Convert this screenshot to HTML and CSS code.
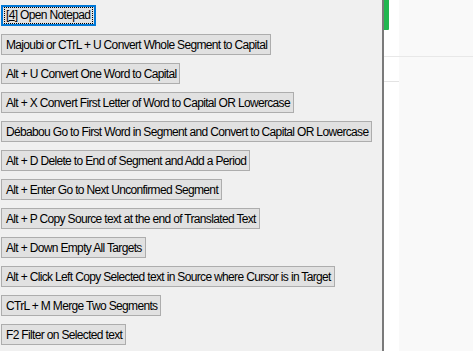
FILE: index.html
```html
<!DOCTYPE html>
<html lang="en">
<head>
  <meta charset="UTF-8">
  <title>Shortcuts</title>
  <link rel="stylesheet" href="styles.css">
</head>
<body>
  <div class="panel">
    <button class="focused"><span class="focus-rect">[<u>4</u>] Open Notepad</span></button>
    <button>Majoubi or CTrL + U Convert Whole Segment to Capital</button>
    <button>Alt + U Convert One Word to Capital</button>
    <button>Alt + X Convert First Letter of Word to Capital OR Lowercase</button>
    <button>Débabou Go to First Word in Segment and Convert to Capital OR Lowercase</button>
    <button>Alt + D Delete to End of Segment and Add a Period</button>
    <button>Alt + Enter Go to Next Unconfirmed Segment</button>
    <button>Alt + P Copy Source text at the end of Translated Text</button>
    <button>Alt + Down Empty All Targets</button>
    <button>Alt + Click Left Copy Selected text in Source where Cursor is in Target</button>
    <button>CTrL + M Merge Two Segments</button>
    <button>F2 Filter on Selected text</button>
  </div>
  <div class="editor">
    <div class="gutter">
      <div class="status-bar"></div>
      <div class="gutter-row"></div>
    </div>
    <div class="rule"></div>
  </div>
</body>
</html>
```
FILE: styles.css
```css
html, body {
  margin: 0;
  height: 100%;
}
body {
  display: flex;
  font-family: "Liberation Sans", Arial, sans-serif;
  overflow: hidden;
}
.panel {
  width: 384px;
  background-color: #f0f0f0;
  border-right: 2px solid #7a7a7a;
  padding: 5px 0 0 1px;
  box-sizing: border-box;
  display: flex;
  flex-direction: column;
  align-items: flex-start;
  gap: 8px;
}
button {
  height: 21px;
  margin: 0;
  padding: 0 3px 0 4px;
  background-color: #e1e1e1;
  border: 1px solid #adadad;
  color: #000;
  font-family: "Liberation Sans", Arial, sans-serif;
  font-size: 12px;
  letter-spacing: -0.66px;
  white-space: nowrap;
  border-radius: 0;
}
button.focused {
  border-color: #0078d7;
  box-shadow: inset 0 0 0 1px #0078d7;
  padding: 0 2px;
}
.focus-rect {
  display: inline-block;
  border: 1px dotted #000;
  padding: 1px 2px 1px 1px;
  line-height: 13px;
}
.editor {
  flex: 1;
  position: relative;
  background-color: #f9f9f9;
}
.gutter {
  width: 15px;
  height: 100%;
  background-color: #fff;
}
.status-bar {
  width: 5px;
  height: 30px;
  background-color: #21b650;
  border-bottom-right-radius: 1px;
}
.gutter-row {
  height: 25px;
  margin-top: 26px;
  border-bottom: 1px solid #e3e3e3;
}
.rule {
  position: absolute;
  left: 0;
  right: 0;
  top: 56px;
  height: 1px;
  background-color: #e8e8e8;
}
```
